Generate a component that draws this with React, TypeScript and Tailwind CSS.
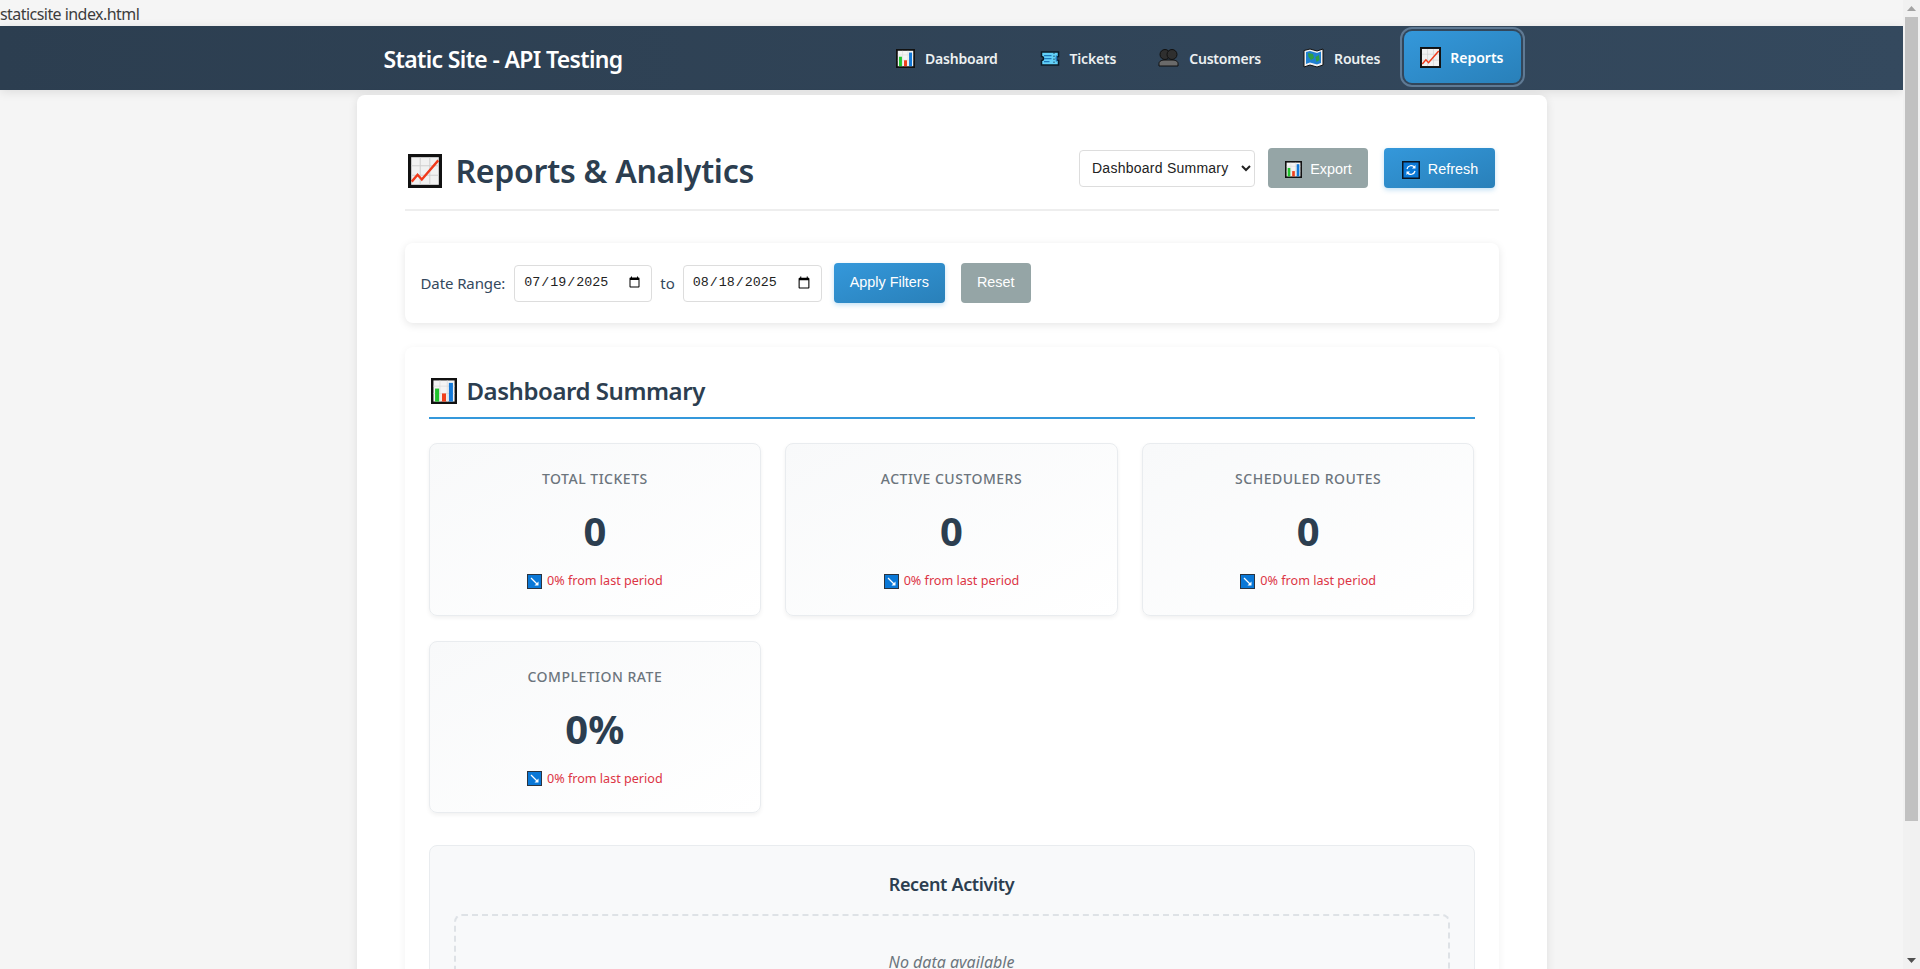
import React from "react";

const sans = "font-['Noto_Sans',sans-serif]";

// emoji drawn by hand, no emoji font here
function BarIcon({ size }: { size: number }) {
  return (
    <svg width={size} height={size} viewBox="0 0 32 32" className="shrink-0">
      <rect x="1.5" y="1.5" width="29" height="29" fill="#f4f4f4" stroke="#111" strokeWidth="3" />
      <path d="M3 10H29M3 19H29M11 3V29M20 3V29" stroke="#dcdcdc" strokeWidth="1" />
      <rect x="5" y="13" width="5" height="16" fill="#22c32e" />
      <rect x="13.5" y="19" width="5" height="10" fill="#f0401c" />
      <rect x="22" y="6" width="5" height="23" fill="#1479d8" />
    </svg>
  );
}

function ChartIcon({ size }: { size: number }) {
  return (
    <svg width={size} height={size} viewBox="0 0 32 32" className="shrink-0">
      <rect x="1.5" y="1.5" width="29" height="29" fill="#f1f1f1" stroke="#111" strokeWidth="3" />
      <path d="M3 11H29M3 20H29M11.500 3V29M20.500 3V29" stroke="#cfcfcf" strokeWidth="1" />
      <path d="M3.500 26L9 19.500L13 24L28.500 6" fill="none" stroke="#f0391a" strokeWidth="2.200" />
    </svg>
  );
}

function TicketIcon() {
  return (
    <svg width="20" height="15" viewBox="0 0 40 30" className="shrink-0">
      <path d="M3 2H37V11A4 4 0 0 0 37 19V28H3V19A4 4 0 0 0 3 11Z" fill="#62d0f8" stroke="#0b1a26" strokeWidth="3" />
      <path d="M28 3V27" stroke="#0b1a26" strokeWidth="1.500" strokeDasharray="3 3" />
      <path d="M8 9H23M8 15H23M8 21H19" stroke="#1d76b8" strokeWidth="2.500" />
      <path d="M33 9V21" stroke="#1d76b8" strokeWidth="3" />
    </svg>
  );
}

function PeopleIcon() {
  return (
    <svg width="21" height="18" viewBox="0 0 42 36" className="shrink-0">
      <circle cx="14" cy="11" r="10" fill="#2f2f2f" stroke="#111" strokeWidth="2" />
      <circle cx="28" cy="11" r="10" fill="#2f2f2f" stroke="#111" strokeWidth="2" />
      <path d="M2 34V29C2 24 8 22 14 22H28C34 22 40 24 40 29V34Z" fill="#6a6a6a" stroke="#111" strokeWidth="2" />
    </svg>
  );
}

function MapIcon() {
  return (
    <svg width="21" height="20" viewBox="0 0 42 40" className="shrink-0">
      <path d="M2 5L14 2L28 6L40 2V34L28 38L14 34L2 38Z" fill="#f2f2f2" stroke="#111" strokeWidth="2" />
      <path d="M6 8L14 6L28 10L36 7V30L28 33L14 29L6 32Z" fill="#1f7fd0" />
      <path d="M10 10L20 12L22 20L16 24L11 18ZM25 18L32 14L33 24L27 28Z" fill="#2f9e44" />
    </svg>
  );
}

function RefreshIcon() {
  return (
    <svg width="18" height="18" viewBox="0 0 36 36" className="shrink-0">
      <rect x="1.500" y="1.500" width="33" height="33" fill="#0a78d7" stroke="#0b1420" strokeWidth="3" />
      <path d="M10 16A8.500 8.500 0 0 1 25 12.500M26 20A8.500 8.500 0 0 1 11 23.500" fill="none" stroke="#fff" strokeWidth="2.500" />
      <path d="M27 8V15H20ZM9 28V21H16Z" fill="#fff" />
    </svg>
  );
}

function DownIcon() {
  return (
    <svg width="15" height="15" viewBox="0 0 30 30" className="shrink-0">
      <rect x="1" y="1" width="28" height="28" fill="#0a78d7" stroke="#2a3440" strokeWidth="2" />
      <path d="M8 8L20 20" stroke="#fff" strokeWidth="2.500" />
      <path d="M23 23H15L23 15Z" fill="#fff" />
    </svg>
  );
}

const navItems = [
  { label: "Dashboard", icon: <BarIcon size={19} /> },
  { label: "Tickets", icon: <TicketIcon /> },
  { label: "Customers", icon: <PeopleIcon /> },
  { label: "Routes", icon: <MapIcon /> },
];

const stats = [
  { label: "Total Tickets", value: "0" },
  { label: "Active Customers", value: "0" },
  { label: "Scheduled Routes", value: "0" },
  { label: "Completion Rate", value: "0%" },
];

function StatCard({ label, value }: { label: string; value: string }) {
  return (
    <div className="h-[172.5px] flex flex-col items-center rounded-lg border border-[#e9ecef] bg-gradient-to-br from-[#f8f9fa] to-white shadow-[0_2px_4px_rgba(0,0,0,0.06)]">
      <div className="mt-[25px] h-[20px] leading-[20px] text-[14px] font-medium uppercase tracking-[0.5px] text-[#6c757d]">{label}</div>
      <div className="mt-[14px] h-[56px] leading-[56px] text-[40px] font-bold text-[#2c3e50]">{value}</div>
      <div className="mt-[12px] flex items-center gap-[5px] text-[12.600px] leading-[20px] text-[#dc3545]">
        <DownIcon />
        <span>0% from last period</span>
      </div>
    </div>
  );
}

export default function App() {
  return (
    <div className={`flex h-screen overflow-hidden bg-[#f5f5f5] ${sans}`}>
      <div className="flex-1 min-w-0 overflow-hidden">
        <div className="h-[26px] leading-[28px] text-[16px] tracking-[-0.55px] text-[#3d3d3d]">staticsite index.html</div>

        {/* navbar */}
        <nav className="h-[64px] bg-gradient-to-r from-[#2c3e50] to-[#34495e] shadow-[0_2px_10px_rgba(0,0,0,0.1)]">
          <div className="mx-auto w-[1190px] h-full flex items-center justify-between pl-[27px] pr-[26px]">
            <h1 className="text-[23px] font-semibold tracking-[-0.65px] text-white mt-[2px]">Static Site - API Testing</h1>
            <div className="flex items-center gap-[6px]">
              {navItems.map((item) => (
                <a key={item.label} className="h-[52px] px-[18px] flex items-center gap-[10px] text-[14px] font-semibold tracking-[-0.2px] text-[#ecf0f1]">
                  {item.icon}
                  {item.label}
                </a>
              ))}
              <a className="h-[52px] pl-[16px] pr-[17px] flex items-center gap-[9px] text-[14px] font-semibold text-white rounded-lg bg-gradient-to-br from-[#3498db] to-[#2980b9] -translate-y-px outline-2 outline-offset-2 outline-[#5f7a94]">
                <ChartIcon size={21} />
                Reports
              </a>
            </div>
          </div>
        </nav>

        {/* main card */}
        <main className="mx-auto mt-[5px] w-[1190px] rounded-lg bg-white px-12 pt-[53px] pb-12 shadow-[0_2px_10px_rgba(0,0,0,0.1)]">
          <div className="flex items-start justify-between pb-[18px] pr-[4px] border-b-2 border-[#eeeeee]">
            <h2 className="pt-[3px] pl-[3px] flex items-center gap-[14px] h-[43px] text-[32px] font-semibold tracking-[-0.25px] text-[#2c3e50]">
              <ChartIcon size={34} />
              Reports &amp; Analytics
            </h2>
            <div className="flex items-center gap-[12.500px] font-['Liberation_Sans',sans-serif] text-[14.400px]">
              <select defaultValue="summary" className="ml-[1px] h-[37px] w-[176px] rounded border border-[#dddddd] bg-white px-[8px] text-[14px] tracking-[0.25px] text-[#222]">
                <option value="summary">Dashboard Summary</option>
              </select>
              <button className="h-[40px] w-[100px] pt-[3px] pl-[2px] flex items-center justify-center gap-[8px] rounded bg-[#95a5a6] text-white">
                <BarIcon size={17} />
                Export
              </button>
              <button className="ml-[3.500px] h-[40px] w-[111px] pt-[3px] pl-[2px] flex items-center justify-center gap-[8px] rounded bg-gradient-to-br from-[#3498db] to-[#2980b9] text-white shadow-[0_2px_5px_rgba(52,152,219,0.3)]">
                <RefreshIcon />
                Refresh
              </button>
            </div>
          </div>

          {/* filters */}
          <div className="mt-[32px] h-[80px] flex items-center rounded-lg bg-white pl-[16px] text-[#2c3e50] shadow-[0_2px_8px_rgba(0,0,0,0.1)]">
            <span className="text-[15px] tracking-[-0.1px] text-[#34495e]">Date Range:</span>
            <input type="date" defaultValue="2025-07-19" className="ml-[9px] h-[37px] w-[138px] rounded border border-[#dddddd] bg-white px-[8px] font-['Liberation_Mono',monospace] text-[13.333px] text-[#222]" />
            <span className="ml-[8px] text-[15px] text-[#34495e]">to</span>
            <input type="date" defaultValue="2025-08-18" className="ml-[8px] h-[37px] w-[139px] rounded border border-[#dddddd] bg-white px-[8px] font-['Liberation_Mono',monospace] text-[13.333px] text-[#222]" />
            <button className="ml-[12px] h-[40px] w-[111px] rounded bg-gradient-to-br from-[#3498db] to-[#2980b9] font-['Liberation_Sans',sans-serif] text-[14.400px] text-white shadow-[0_2px_5px_rgba(52,152,219,0.3)]">Apply Filters</button>
            <button className="ml-[16px] h-[40px] w-[70px] rounded bg-[#95a5a6] font-['Liberation_Sans',sans-serif] text-[14.400px] text-white">Reset</button>
          </div>

          {/* dashboard summary */}
          <section className="mt-[24px] rounded-lg bg-white p-[24px] shadow-[0_2px_8px_rgba(0,0,0,0.06)]">
            <div className="h-[48px] pb-[6px] flex items-center gap-[10px] pl-[2px] border-b-2 border-[#3498db] text-[24px] font-semibold tracking-[-0.45px] text-[#2c3e50]">
              <BarIcon size={26} />
              Dashboard Summary
            </div>
            <div className="mt-[24px] grid grid-cols-3 gap-x-[24px] gap-y-[25px]">
              {stats.map((s) => (
                <StatCard key={s.label} label={s.label} value={s.value} />
              ))}
            </div>
            <div className="mt-[32px] rounded-lg border border-[#e9ecef] bg-[#f8f9fa] p-[24px]">
              <h3 className="-mt-[1px] text-center text-[18px] leading-[30px] font-semibold tracking-[-0.35px] text-[#2c3e50]">Recent Activity</h3>
              <div className="mt-[15px] rounded-lg border-2 border-dashed border-[#dee2e6] py-[34px] text-center text-[16px] leading-[24px] italic text-[#6c757d]">No data available</div>
            </div>
          </section>
        </main>
      </div>

      {/* scrollbar */}
      <div className="w-[17px] shrink-0 h-full flex flex-col items-center bg-[#f1f1f1]">
        <div className="h-[17px] flex items-center justify-center text-[#a3a3a3]">
          <svg width="9" height="5" viewBox="0 0 9 5"><path d="M4.500 0L9 5H0Z" fill="currentColor" /></svg>
        </div>
        <div className="w-[13px] h-[804px] bg-[#c1c1c1]" />
        <div className="flex-1" />
        <div className="h-[17px] flex items-center justify-center text-[#505050]">
          <svg width="9" height="5" viewBox="0 0 9 5"><path d="M0 0H9L4.500 5Z" fill="currentColor" /></svg>
        </div>
      </div>
    </div>
  );
}
